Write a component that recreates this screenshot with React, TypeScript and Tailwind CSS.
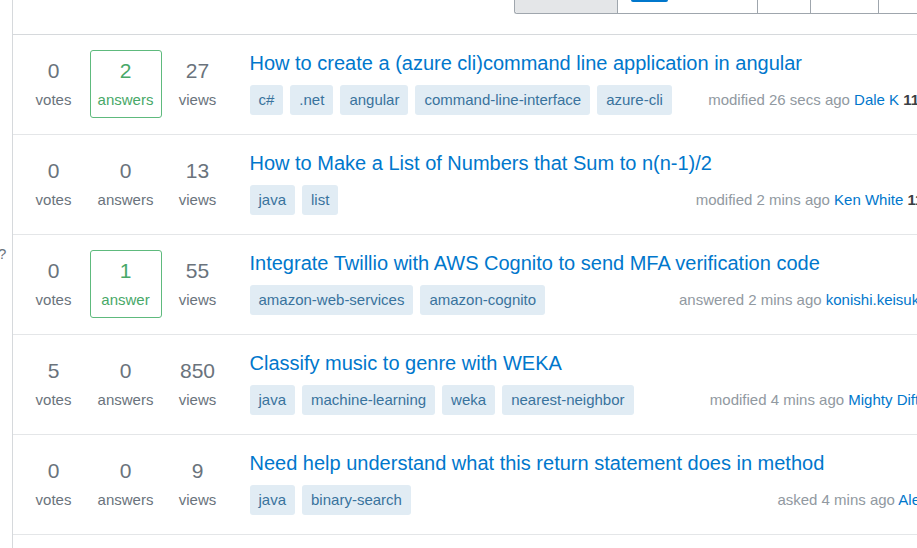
import React from "react";

type Q = {
  votes: number;
  answers: number;
  views: number;
  title: string;
  tags: string[];
  action: string;
  time: string;
  user: string;
  rep: string;
};

const questions: Q[] = [
  {
    votes: 0,
    answers: 2,
    views: 27,
    title: "How to create a (azure cli)command line application in angular",
    tags: ["c#", ".net", "angular", "command-line-interface", "azure-cli"],
    action: "modified",
    time: "26 secs ago",
    user: "Dale K",
    rep: "11.2k",
  },
  {
    votes: 0,
    answers: 0,
    views: 13,
    title: "How to Make a List of Numbers that Sum to n(n-1)/2",
    tags: ["java", "list"],
    action: "modified",
    time: "2 mins ago",
    user: "Ken White",
    rep: "119k",
  },
  {
    votes: 0,
    answers: 1,
    views: 55,
    title: "Integrate Twillio with AWS Cognito to send MFA verification code",
    tags: ["amazon-web-services", "amazon-cognito"],
    action: "answered",
    time: "2 mins ago",
    user: "konishi.keisuke",
    rep: "1",
  },
  {
    votes: 5,
    answers: 0,
    views: 850,
    title: "Classify music to genre with WEKA",
    tags: ["java", "machine-learning", "weka", "nearest-neighbor"],
    action: "modified",
    time: "4 mins ago",
    user: "Mighty Dift",
    rep: "55",
  },
  {
    votes: 0,
    answers: 0,
    views: 9,
    title: "Need help understand what this return statement does in method",
    tags: ["java", "binary-search"],
    action: "asked",
    time: "4 mins ago",
    user: "Alex",
    rep: "9",
  },
];

function Stat({ n, label, answered }: { n: number; label: string; answered?: boolean }) {
  return (
    <div
      className={
        answered
          ? "w-[72px] h-[68px] flex flex-col items-center justify-center rounded-[3px] border border-[#5eba7d] text-[#48a868]"
          : "w-[72px] h-[68px] flex flex-col items-center justify-center rounded-[3px] border border-transparent text-[#6a737c]"
      }
    >
      <div className="text-[21px] leading-[24px]">{n}</div>
      <div className="text-[15px] leading-[20px] mt-[7px]">{label}</div>
    </div>
  );
}

function Row({ q }: { q: Q }) {
  return (
    <div className="flex h-[100px] border-b border-[#e4e6e8]">
      <div className="flex pl-[4.5px] pt-[15px] shrink-0">
        <Stat n={q.votes} label="votes" />
        <Stat
          n={q.answers}
          label={q.answers === 1 ? "answer" : "answers"}
          answered={q.answers > 0}
        />
        <Stat n={q.views} label="views" />
      </div>
      <div className="ml-[16px] flex-1 pt-[15px] min-w-0">
        <div className="text-[20px] leading-[26px] text-[#0077cc] whitespace-nowrap">{q.title}</div>
        <div className="mt-[9px] h-[30px] flex items-center justify-between">
          <div className="flex gap-[7px]">
            {q.tags.map((t) => (
              <span
                key={t}
                className="h-[30px] px-[9px] flex items-center bg-[#e1ecf4] text-[#39739d] rounded-[3px] text-[15px] whitespace-nowrap"
              >
                {t}
              </span>
            ))}
          </div>
          <div className="text-[15px] text-[#9199a1] whitespace-nowrap">
            {q.action} {q.time} <span className="text-[#0077cc]">{q.user}</span>{" "}
            <span className="font-bold text-[#3b4045]">{q.rep}</span>
          </div>
        </div>
      </div>
    </div>
  );
}

export default function App() {
  return (
    <div
      className="w-[917px] h-[548px] overflow-hidden bg-white flex"
      style={{ fontFamily: '"Liberation Sans", Arial, sans-serif' }}
    >
      <div className="w-[12px] shrink-0 pt-[244px] text-[15px] leading-[20px] text-[#6a737c] overflow-hidden">
        <span className="block -ml-[2px]">?</span>
      </div>
      <div className="w-[928px] shrink-0 border-l border-[#d6d9dc] h-full">
        <div className="h-[35px] border-b border-[#d6d9dc] flex">
          <div className="ml-[501px] flex h-[14px] border-b border-l border-[#9fa6ad] rounded-bl-[3px]">
            <div className="w-[103px] h-full bg-[#e4e6e8] border-r border-[#9fa6ad] rounded-bl-[3px]" />
            <div className="w-[140px] h-full border-r border-[#9fa6ad]">
              <div className="ml-[13px] w-[37px] h-[2px] bg-[#0077cc] rounded-b-[2px]" />
            </div>
            <div className="w-[53px] h-full border-r border-[#9fa6ad]" />
            <div className="w-[68px] h-full border-r border-[#9fa6ad]" />
            <div className="w-[80px] h-full" />
          </div>
        </div>
        {questions.map((q) => (
          <Row key={q.title} q={q} />
        ))}
      </div>
    </div>
  );
}
